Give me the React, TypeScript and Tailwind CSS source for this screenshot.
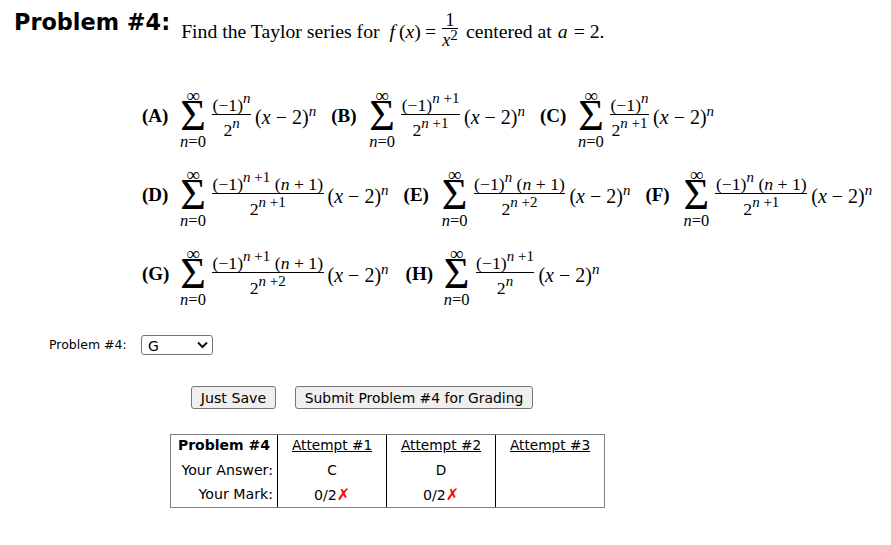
import type { ReactNode } from 'react';

const verdana = { fontFamily: '"DejaVu Sans", Verdana, sans-serif' };

function N() {
  return <i>n</i>;
}

function Pow({ children }: { children: ReactNode }) {
  return <sup className="text-[15px] leading-none -top-[8px]">{children}</sup>;
}

function Num({ exp, extra }: { exp: string; extra?: boolean }) {
  return (
    <span className="whitespace-pre">
      (−1)
      <Pow>
        <N />
        {exp}
      </Pow>
      {extra && (
        <>
          {' '}(<N /> + 1)
        </>
      )}
    </span>
  );
}

function Den({ exp }: { exp: string }) {
  return (
    <span className="whitespace-pre">
      2
      <Pow>
        <N />
        {exp}
      </Pow>
    </span>
  );
}

function Series({ label, exp, extra, den, className }: { label: string; exp: string; extra?: boolean; den: string; className: string }) {
  return (
    <div className={`flex items-center leading-none ${className}`}>
      <b className="w-[36px] text-[19px] -mt-[8px]">{label}</b>
      <div className="flex flex-col items-center w-[30px] text-[16.5px] mr-[4px]">
        <span className="h-[14px] leading-[14px] text-[19px]">∞</span>
        <span className="h-[28px] text-[44px] leading-[28px] -mt-[1px]">Σ</span>
        <span className="mt-[4px] h-[16px]">
          <N />=0
        </span>
      </div>
      <div className="flex flex-col items-center -mt-[11px] text-[17.7px]">
        <div className="h-[22px] border-b border-black leading-[24px] px-[0.5px]">
          <Num exp={exp} extra={extra} />
        </div>
        <div className="h-[21px] leading-[30px]">
          <Den exp={den} />
        </div>
      </div>
      <span className="ml-[4px] -mt-[5px] whitespace-pre text-[20px]">
        (<i>x</i> − 2)
        <Pow>
          <N />
        </Pow>
      </span>
    </div>
  );
}

export default function App() {
  return (
    <div className="w-[891px] h-[545px] bg-white text-black overflow-hidden" style={{ fontFamily: '"Liberation Serif", serif' }}>
      {/* Question */}
      <div className="flex items-start pl-[14px] pt-[8px]">
        <h1 className="text-[22.4px] leading-[28px] font-bold" style={verdana}>
          Problem #4:
        </h1>
        <div className="ml-[11px] mt-[10px] flex items-center text-[19.7px] leading-[26px] whitespace-pre">
          <span>Find the Taylor series for</span>
          <i className="ml-[10px]">f</i>
          <span className="ml-[4px]">
            (<i>x</i>)
          </span>
          <span className="ml-[4px]">=</span>
          <span className="self-start -mt-[6px] -mb-[14px] ml-[6px] mr-[8px] w-[16px] flex flex-col items-stretch text-center text-[18px]">
            <span className="h-[17px] leading-[16px] border-b border-black">1</span>
            <span className="h-[23px] leading-[23px]">
              <i>x</i>
              <sup className="text-[15px] -top-[6px]">2</sup>
            </span>
          </span>
          <span>centered at</span>
          <i className="ml-[6px]">a</i>
          <span className="ml-[6px]">= 2.</span>
        </div>
      </div>

      {/* Choices */}
      <div className="ml-[142px] mt-[44px] flex flex-col gap-[16px]">
        <div className="flex h-[63px]">
          <Series label="(A)" exp="" den="" className="" />
          <Series label="(B)" exp=" +1" den=" +1" className="ml-[15px]" />
          <Series label="(C)" exp="" den=" +1" className="ml-[15px]" />
        </div>
        <div className="flex h-[63px]">
          <Series label="(D)" exp=" +1" extra den=" +1" className="" />
          <Series label="(E)" exp="" extra den=" +2" className="ml-[15px]" />
          <Series label="(F)" exp="" extra den=" +1" className="ml-[15px]" />
        </div>
        <div className="flex h-[63px]">
          <Series label="(G)" exp=" +1" extra den=" +2" className="" />
          <Series label="(H)" exp=" +1" den="" className="ml-[17px]" />
        </div>
      </div>

      {/* Answer */}
      <div className="flex items-center ml-[49px] mt-[26px] text-[12.5px]" style={verdana}>
        <label htmlFor="answer" className="w-[92px]">
          Problem #4:
        </label>
        <div className="relative w-[72px] h-[20px]">
          <select
            id="answer"
            defaultValue="G"
            className="w-full h-full border border-[#767676] rounded-[3px] bg-white text-[14px] pl-[6px] appearance-none"
          >
            {['A', 'B', 'C', 'D', 'E', 'F', 'G', 'H'].map((o) => (
              <option key={o}>{o}</option>
            ))}
          </select>
          <svg className="absolute right-[5px] top-[6px] w-[11px] h-[8px] pointer-events-none" viewBox="0 0 11 8" fill="none" stroke="#111" strokeWidth="2">
            <path d="M1 1.5 5.5 6 10 1.5" />
          </svg>
        </div>
      </div>

      <div className="flex ml-[191px] mt-[31px] gap-[19px]" style={verdana}>
        <button className="w-[85px] h-[23px] pt-[1px] text-[14.2px] bg-[#efefef] border border-[#767676] rounded-[3px]">Just Save</button>
        <button className="w-[238px] h-[23px] pt-[1px] text-[13.9px] bg-[#efefef] border border-[#767676] rounded-[3px]">Submit Problem #4 for Grading</button>
      </div>

      {/* Attempts */}
      <table className="ml-[170px] mt-[25px] w-[435px] h-[72px] border border-[#808080] border-separate border-spacing-0 text-[13.7px] table-fixed" style={verdana}>
        <tbody>
          <tr className="h-[24px]">
            <th className="w-[107px] text-right pr-[7px] pb-[4px] text-[14px] font-bold border-r border-black">Problem #4</th>
            <td className="w-[109px] text-center underline pb-[4px] border-r border-black">Attempt #1</td>
            <td className="w-[109px] text-center underline pb-[4px] border-r border-black">Attempt #2</td>
            <td className="text-center underline pb-[4px]">Attempt #3</td>
          </tr>
          <tr className="h-[23px]">
            <td className="text-right pr-[4px] pb-[2px] text-[14.2px] border-r border-black">Your Answer:</td>
            <td className="text-center pb-[2px] border-r border-black">C</td>
            <td className="text-center pb-[2px] border-r border-black">D</td>
            <td />
          </tr>
          <tr className="h-[23px]">
            <td className="text-right pr-[4px] pb-[1px] text-[14.2px] border-r border-black">Your Mark:</td>
            <td className="text-center text-[14.2px] border-r border-black">
              0/2<span className="text-[#ff0000] text-[16px] font-bold">✗</span>
            </td>
            <td className="text-center text-[14.2px] border-r border-black">
              0/2<span className="text-[#ff0000] text-[16px] font-bold">✗</span>
            </td>
            <td />
          </tr>
        </tbody>
      </table>
    </div>
  );
}
